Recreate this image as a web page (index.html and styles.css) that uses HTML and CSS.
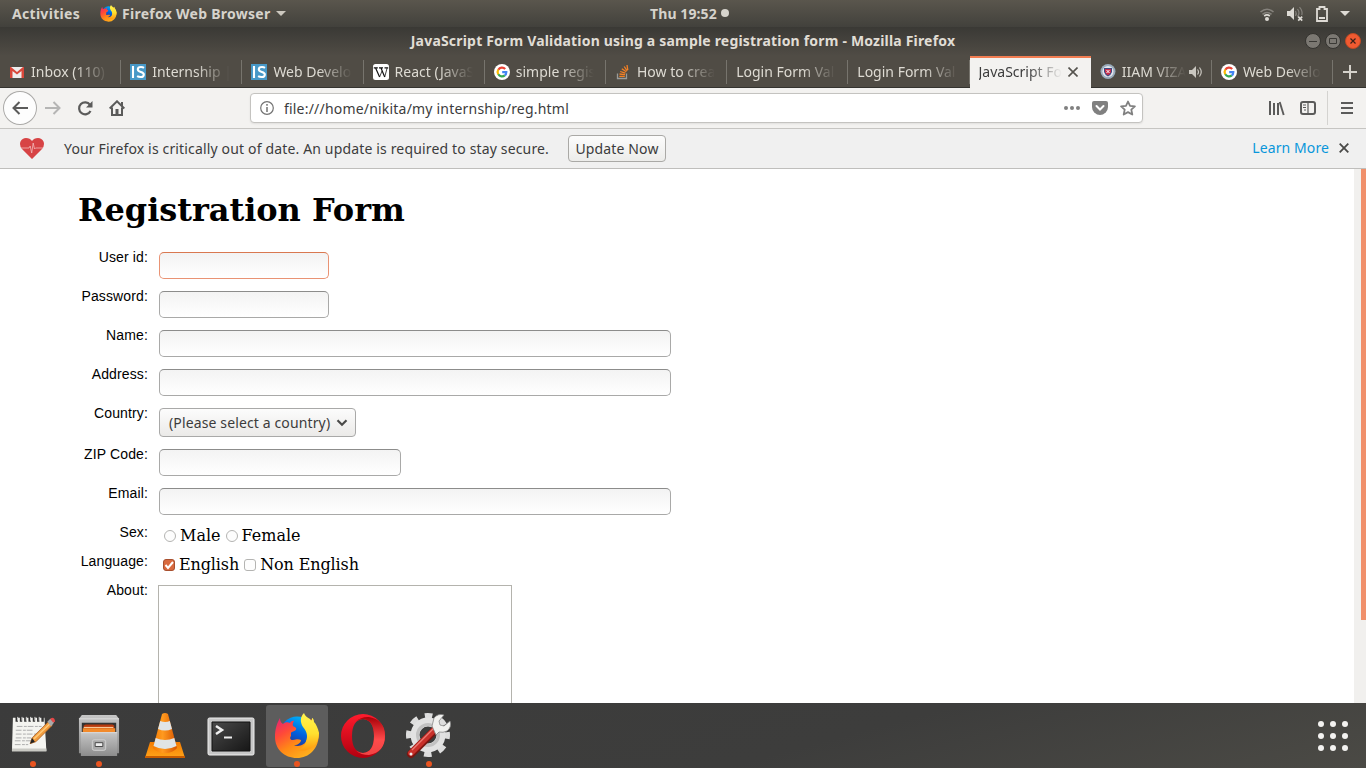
FILE: index.html
```html
<!DOCTYPE html>
<html lang="en">
<head>
<meta charset="utf-8">
<title>JavaScript Form Validation using a sample registration form</title>
<link rel="stylesheet" href="styles.css">
</head>
<body>
<svg class="defs" width="0" height="0">
  <defs>
    <linearGradient id="fxBody" x1="0.1" y1="0" x2="0.8" y2="1"><stop offset="0" stop-color="#e8266f"/><stop offset=".3" stop-color="#ff4a38"/><stop offset=".6" stop-color="#ff8a16"/><stop offset="1" stop-color="#ffb81f"/></linearGradient>
    <linearGradient id="fxTail" x1="0" y1="0" x2="0" y2="1"><stop offset="0" stop-color="#fff44f"/><stop offset=".55" stop-color="#ffe02f"/><stop offset="1" stop-color="#ff980e"/></linearGradient>
    <linearGradient id="fxGlobe" x1=".7" y1="0" x2=".3" y2="1"><stop offset="0" stop-color="#00b5f9"/><stop offset=".5" stop-color="#0060df"/><stop offset="1" stop-color="#312a78"/></linearGradient>
    <linearGradient id="metal" x1="0" y1="0" x2="0" y2="1"><stop offset="0" stop-color="#c6c6c6"/><stop offset="1" stop-color="#8c8c8c"/></linearGradient>
    <linearGradient id="cone" x1="0" x2="1" y1="0" y2="0"><stop offset="0" stop-color="#f57900"/><stop offset=".4" stop-color="#ff9a1f"/><stop offset="1" stop-color="#d95500"/></linearGradient>
    <linearGradient id="base" x1="0" x2="0" y1="0" y2="1"><stop offset="0" stop-color="#f47b00"/><stop offset="1" stop-color="#ffa51a"/></linearGradient>
    <linearGradient id="screen" x1="0" x2="1" y1="0" y2="1"><stop offset="0" stop-color="#4a4a4a"/><stop offset="1" stop-color="#161616"/></linearGradient>
    <linearGradient id="opera" x1="0" x2="0" y1="0" y2="1"><stop offset="0" stop-color="#ff1b2d"/><stop offset="1" stop-color="#b1000f"/></linearGradient>
    <linearGradient id="opera2" x1="0" x2="0" y1="0" y2="1"><stop offset="0" stop-color="#a80008"/><stop offset=".6" stop-color="#ff4b4b"/><stop offset="1" stop-color="#f04444"/></linearGradient>
    <symbol id="firefox" viewBox="0 0 44 46">
      <circle cx="22" cy="20" r="16.500" fill="url(#fxGlobe)"/>
      <path d="M5 5C5 8 6 10 8 11C10 9 13 9 15 10C16 8 18 7.500 19 8C17.500 10 17.500 12 18 13C20 14 22 15 21 16.500C20 18.500 16.500 18.500 16 20L16 23C14 25 16 27.500 18 27C21 26.500 23 25.500 26 27C26 30 22 32.500 19 32C23 34.500 30 32 32 27C34 22 33 17 30 12L36 6L44 20C44 36 34 45 22 45C9 45 0 36 0 24C0 16 2 10 5 5z" fill="url(#fxBody)"/>
      <path d="M29 0C25 4 25 9 28 14C32 19 33 23 31 28C30 33 26 36 22 37C32 40 44 34 44 20C43 15 41 11 39 9C39 7 38 5 37 5C37 8 36 8 35 6C32 4 30 3 29 0z" fill="url(#fxTail)"/>
    </symbol>
    <symbol id="google" viewBox="0 0 16 16"><circle cx="8" cy="8" r="8" fill="#fff"/><g fill="none" stroke-width="2.200"><path d="M4.300 5.700A4.300 4.300 0 0 1 11.200 5" stroke="#ea4335"/><path d="M4.300 10.300a4.300 4.300 0 0 1 0-4.600" stroke="#fbbc05"/><path d="M4.300 10.300A4.300 4.300 0 0 0 10.800 11.300" stroke="#34a853"/><path d="M8.200 8.200h4.100q0 2-1.500 3.100" stroke="#4285f4"/></g></symbol>
    <symbol id="is" viewBox="0 0 16 16"><path fill="#4798c7" d="M0 0h16v16H0z"/><path d="M3 2v12M14 3.800Q12.800 3 11 3q-3.200 0-3.200 2.300 0 1.800 3 2.600t3 2.500Q13.800 13 10.700 13q-2.100 0-3.600-.9" fill="none" stroke="#fff" stroke-width="2.100"/></symbol>
  </defs>
</svg>
<div class="desktop">
  <header class="panel">
    <span class="activities">Activities</span>
    <svg class="panel-fox" width="17" height="17"><use href="#firefox"/></svg>
    <span class="appname">Firefox Web Browser</span>
    <svg class="caret" width="10" height="5"><path d="M0 0h10L5 5z" fill="#ccc8bf"/></svg>
    <div class="clock"><span>Thu 19:52</span><i></i></div>
    <div class="tray">
      <svg width="16" height="16" viewBox="0 0 16 16" fill="none" stroke-width="1.600"><path d="M1.500 6Q8 .5 14.500 6M3.500 8.300q4.500-3.600 9 0" stroke="#85827c"/><path d="M5.200 10q2.800-2.200 5.600 0" stroke="#dedbd5"/><circle cx="8" cy="13" r="2" fill="#dedbd5"/></svg>
      <svg width="18" height="16" viewBox="0 0 18 16"><path d="M1 5h3l4-4v13l-4-4H1z" fill="#dedbd5"/><path d="M9.500 5q1.500 2.500 0 5M11.500 3q3 4 0 7.500M13.500 1.200q3.500 4 2.300 8" fill="none" stroke="#85827c" stroke-width="1.200"/><path d="m12.200 10.700 4 4m0-4-4 4" stroke="#dedbd5" stroke-width="1.700"/></svg>
      <svg width="14" height="16" viewBox="0 0 14 16"><path d="M2 3h2.500V1h5v2H12v12H2z" fill="none" stroke="#dedbd5" stroke-width="1.800"/><path d="M4 12h6" stroke="#dedbd5" stroke-width="2"/></svg>
      <svg width="10" height="5"><path d="M0 0h10L5 5z" fill="#dedbd5"/></svg>
    </div>
  </header>
  <div class="titlebar">
    <span class="title">JavaScript Form Validation using a sample registration form - Mozilla Firefox</span>
    <div class="winbtns">
      <svg width="16" height="16"><circle cx="8" cy="8" r="7.500" fill="#7b7872" stroke="#34332f"/><path d="M4 8.500h8" stroke="#3a3935"/></svg>
      <svg width="16" height="16"><circle cx="8" cy="8" r="7.500" fill="#7b7872" stroke="#34332f"/><path d="M4.500 5.500h7v5h-7z" fill="none" stroke="#3a3935"/></svg>
      <svg width="16" height="16"><circle cx="8" cy="8" r="7.500" fill="#f05a31" stroke="#c04a24"/><path d="m5.500 5.500 5 5m0-5-5 5" stroke="#3a2018" stroke-width="1.200"/></svg>
    </div>
  </div>
  <nav class="tabs">
    <div class="tab"><svg width="16" height="16"><path d="M1 3h14v11H1z" fill="#eee"/><path d="M1 14V3h1l6 5 6-5h1v11h-2.500V7L8 10.500 3.500 7v7z" fill="#d9483b"/></svg><span>Inbox (110) - </span></div>
    <div class="tab"><svg width="16" height="16"><use href="#is"/></svg><span>Internship | S</span></div>
    <div class="tab"><svg width="16" height="16"><use href="#is"/></svg><span>Web Develo</span></div>
    <div class="tab"><svg width="16" height="16"><rect width="16" height="16" rx="2.500" fill="#fff"/><path d="M.8 3.800h4M6 3.800h4M11.500 3.800h3.700M2.600 4l4 9M8 4l3.700 9" stroke="#111" stroke-width="1.200"/><path d="M6.600 13 9 7M11.700 13l2.400-9" fill="none" stroke="#111" stroke-width=".8"/></svg><span>React (JavaS</span></div>
    <div class="tab"><svg width="16" height="16"><use href="#google"/></svg><span>simple regis</span></div>
    <div class="tab"><svg width="16" height="16" fill="none"><path d="M2.500 9.500v5h9v-5" stroke="#9b9b98" stroke-width="1.300"/><path d="M4.300 12.300h5.500M4.500 10l5.500.7M5.200 7.500l5.200 1.700M6.800 4.800l4.500 3M9.200 2.500l3 4.300M12 1l.8 5" stroke="#f48024" stroke-width="1.300"/></svg><span>How to crea</span></div>
    <div class="tab"><span>Login Form Val</span></div>
    <div class="tab"><span>Login Form Val</span></div>
    <div class="tab active"><span>JavaScript Fo</span><svg width="10" height="10"><path d="m.5.500 9 9m0-9-9 9" stroke="#55534e" stroke-width="1.600"/></svg></div>
    <div class="tab audio"><svg width="16" height="16"><circle cx="8" cy="7.500" r="7.500" fill="#9aacbc"/><circle cx="8" cy="7.500" r="5.500" fill="#e4e6ed"/><path d="M4 4h8v4q-1 3-4 4.500Q5 11 4 8z" fill="#3e4a82"/><path d="M5 5h6v3q-1 2.500-3 3.300Q6 10.500 5 8z" fill="#c92d48"/><path d="m6.500 6 3 3m0-3-3 3" stroke="#fff"/></svg><span>IIAM VIZAG</span><svg class="speaker" width="14" height="12" viewBox="0 0 14 12"><path d="M0 4h3l4-4v12L3 8H0z" fill="#c9c6bf"/><path d="M8.500 3.500q2 2.500 0 5M10.500 1.500q3.500 4.500 0 9" fill="none" stroke="#c9c6bf" stroke-width="1.200"/></svg></div>
    <div class="tab"><svg width="16" height="16"><use href="#google"/></svg><span>Web Develo</span></div>
    <div class="newtab"><svg width="14" height="14"><path d="M7 0v14M0 7h14" stroke="#d5d2cb" stroke-width="2"/></svg></div>
  </nav>
  <div class="toolbar">
    <div class="back"><svg width="16" height="14"><path d="M7.500 1 1.500 7l6 6M1.500 7H16" fill="none" stroke="#5b5b5a" stroke-width="2"/></svg></div>
    <svg class="fwd" width="16" height="14"><path d="m8.500 1 6 6-6 6M14.500 7H0" fill="none" stroke="#b5b5b4" stroke-width="2"/></svg>
    <svg class="reload" width="16" height="16"><path d="M13.500 11A6 6 0 1 1 13 4.800" fill="none" stroke="#5b5b5a" stroke-width="2.200"/><path d="M15.500 1v6.500H9z" fill="#5b5b5a"/></svg>
    <svg class="home" width="16" height="16"><path d="M.7 8.500 8 1.300l7.300 7.200M3 7.500V15h10V7.500" fill="none" stroke="#5b5b5a" stroke-width="2"/><path d="M6.500 9h3v6h-3z" fill="#5b5b5a"/><path d="M12 2h2v4h-2z" fill="#5b5b5a"/></svg>
    <div class="urlbar">
      <svg width="14" height="14"><circle cx="7" cy="7" r="6.300" fill="none" stroke="#737373" stroke-width="1.200"/><path d="M7 6v5M7 3v1.700" stroke="#737373" stroke-width="1.500"/></svg>
      <span class="url">file:///home/nikita/my internship/reg.html</span>
      <svg class="dots" width="16" height="4" fill="#808080"><circle cx="2" cy="2" r="2"/><circle cx="8" cy="2" r="2"/><circle cx="14" cy="2" r="2"/></svg>
      <svg class="pocket" width="16" height="14"><path d="M2 0h12q2 0 2 2v4q0 3-2.300 5.500Q11 14 8 14t-5.700-2.500Q0 9 0 6V2q0-2 2-2z" fill="#808080"/><path d="m4.500 5 3.500 3.500L11.500 5" fill="none" stroke="#fff" stroke-width="2" stroke-linecap="round"/></svg>
      <svg width="16" height="16"><path d="m8 1.500 2 4.400 4.900.5-3.600 3.200 1 4.900L8 12.100l-4.300 2.400 1-4.900L1.100 6.400 6 5.900z" fill="none" stroke="#808080" stroke-width="1.800" stroke-linejoin="round"/></svg>
    </div>
    <svg class="library" width="16" height="15"><path d="M1 0v14M5 2v12M9 2v12" stroke="#5b5b5a" stroke-width="2"/><path d="m10.700 1 4 13" stroke="#5b5b5a" stroke-width="1.900"/></svg>
    <svg class="sidebar" width="16" height="14"><rect x="1" y="1" width="14" height="12" rx="2" fill="none" stroke="#5b5b5a" stroke-width="2"/><path d="M8 1v12M3 4h3M3 6.500h3M4 9h2" stroke="#5b5b5a" stroke-width="1.200"/></svg>
    <div class="menu"><svg width="12" height="12"><path d="M0 1h12M0 6h12M0 11h12" stroke="#5b5b5a" stroke-width="2"/></svg></div>
  </div>
  <div class="notice">
    <svg width="24" height="21" viewBox="0 0 24 21"><path d="M12 21 2 11Q-1 7.500.5 3.500 2.200 0 6 0q4 0 6 3 2-3 6-3 3.800 0 5.500 3.500Q25 7.500 22 11z" fill="#d74345"/><path d="M1 10h8l1.200-2 1.500 7L13.200 5l1.300 6 1-1H23" fill="none" stroke="#f3b9b9" stroke-width=".8"/></svg>
    <span class="msg">Your Firefox is critically out of date. An update is required to stay secure.</span>
    <button class="update">Update Now</button>
    <a class="learn">Learn More</a>
    <svg class="dismiss" width="10" height="10"><path d="m.7.700 8.600 8.600m0-8.600L.7 9.300" stroke="#494947" stroke-width="1.800"/></svg>
  </div>
  <main class="page">
    <form class="form">
      <h1>Registration Form</h1>
      <div class="row"><label>User id:</label><input class="short focus" type="text"></div>
      <div class="row"><label>Password:</label><input class="short" type="password"></div>
      <div class="row"><label>Name:</label><input class="long" type="text"></div>
      <div class="row"><label>Address:</label><input class="long" type="text"></div>
      <div class="row"><label>Country:</label><div class="select"><span>(Please select a country)</span><svg width="12" height="8"><path d="m1.500 1.200 4.500 4.500 4.500-4.500" fill="none" stroke="#4a4a49" stroke-width="2.200"/></svg></div></div>
      <div class="row"><label>ZIP Code:</label><input class="mid" type="text"></div>
      <div class="row"><label>Email:</label><input class="long" type="text"></div>
      <div class="row choices"><label>Sex:</label><div class="opts"><i class="radio"></i><span>Male</span><i class="radio"></i><span>Female</span></div></div>
      <div class="row choices"><label>Language:</label><div class="opts lang"><i class="check on"><svg width="12" height="12"><path d="m2.500 6 2.500 3 5-6" fill="none" stroke="#fff" stroke-width="2"/></svg></i><span>English</span><i class="check"></i><span>Non English</span></div></div>
      <div class="row about"><label>About:</label><div class="textarea"></div></div>
    </form>
    <div class="scroll"><div class="thumb"></div></div>
  </main>
  <footer class="dock">
    <div class="app running">
      <svg width="46" height="44" viewBox="0 1 48 46"><path d="M3 5h33l2 35H2z" fill="#f4f4f0"/><path d="M2 37h36v3H2z" fill="#c9c9c3"/><path d="M7 14h26M6 18h18M6 22h24M6 26h16M5 29h20M5 33h14" stroke="#aaa" stroke-dasharray="6 1.500 3 1"/><path d="M7 4v5M11.500 4v5M16 4v5M20.500 4v5M25 4v5M29.500 4v5M34 4v5" stroke="#333" stroke-width="2.500"/><path d="M8 4v4M12.500 4v4M17 4v4M21.500 4v4M26 4v4M30.500 4v4" stroke="#ddd"/><path d="m21 32 2-6L40 9l4 4-17 17z" fill="#f19b3d" stroke="#a35b1d" stroke-width=".8"/><path d="m25 27 17-16" stroke="#ffca78" stroke-width="1.500"/><path d="m21 32 2-6 3 4z" fill="#222"/><path d="m39 9 3-3 4 4-3 4z" fill="#aaa"/><path d="m42 6 2-1q3 0 3 4l-2 1z" fill="#e64747"/></svg>
    </div>
    <div class="app running">
      <svg width="42" height="44" viewBox="0 0 44 46"><path d="M4 1h36l3 4v36H1V5z" fill="url(#metal)"/><path d="M1 5h42" stroke="#ddd"/><path d="M4 9h36v10H4z" fill="#333"/><path d="M6 12l2-1h28l2 1v7H6z" fill="#b93a0d"/><path d="M5 15h34v4H5z" fill="#f28a2b"/><path d="M6 14h31" stroke="#ffe0b0"/><path d="M3 19h38v25H3z" fill="url(#metal)"/><path d="M3 19.500h38" stroke="#ddd"/><rect x="15" y="27" width="14" height="11" rx="2" fill="#aaa" stroke="#d2d2d2"/><path d="M18 30h8v4h-8z" fill="#eee" stroke="#444"/></svg>
    </div>
    <div class="app">
      <svg width="42" height="46" viewBox="0 0 42 46"><path d="M6 29h30l5 16H1z" fill="url(#base)"/><path d="M1 44h40" stroke="#c85c00" stroke-width="2"/><path d="m18 1q3-2 6 0l9 34q-4 5-12 5T9 35z" fill="url(#cone)"/><path d="m16.200 8q5 2 9.600 0l2.200 8q-7 3-14 0zM11.700 25q9.300 4 18.600 0l2.200 8q-11.500 6-23 0z" fill="#e0e4e6"/></svg>
    </div>
    <div class="app">
      <svg width="48" height="40" viewBox="0 -1 48 40"><rect x="1" y="1" width="46" height="37" rx="1.500" fill="#c7c7c7" stroke="#eee"/><path d="M5 5h38v29H5z" fill="url(#screen)" stroke="#111"/><path d="m9 9 6 4-6 4" fill="none" stroke="#eee" stroke-width="2.500"/><path d="M17 20.500h8" stroke="#eee" stroke-width="2"/></svg>
    </div>
    <div class="app running current"><svg width="44" height="46" viewBox="0 0 44 46"><use href="#firefox"/></svg></div>
    <div class="app">
      <svg width="44" height="44"><path d="M22 0a22 22 0 1 0 0 44a22 22 0 0 0 0-44zM22 5Q33 6 33 22T22 39Q11 38 11 22T22 5z" fill="url(#opera)" fill-rule="evenodd"/><path d="M15 7.500Q20 2.500 28 3Q44 6 44 22T28 41Q20 41 15 36.500Q19 39 22 39Q33 38 33 22T22 5Q18 5 15 7.500z" fill="url(#opera2)"/></svg>
    </div>
    <div class="app running">
      <svg width="46" height="46" viewBox="0 0 46 46"><circle cx="22" cy="22" r="18.500" fill="none" stroke="#ddd" stroke-width="7" stroke-dasharray="7.300 7.230" stroke-dashoffset="3.650"/><circle cx="22" cy="22" r="13" fill="none" stroke="#e2e2e2" stroke-width="9"/><circle cx="22" cy="22" r="10.500" fill="none" stroke="#c2c2c2" stroke-width="3"/><path d="m5 41 25-25" stroke="#7b1510" stroke-width="8" stroke-linecap="round"/><path d="m5 40 25-25" stroke="#c9302a" stroke-width="6" stroke-linecap="round"/><path d="m6 37 22-22" stroke="#ec7a72" stroke-width="1.300"/><circle cx="5" cy="41" r="1.500" fill="#eee"/><path d="m26 13 2-8q4-5 10-3l-5 6 1 4 4 1 6-5q2 6-3 10-4 2-8 1l-3 3z" fill="#f1f1ef" stroke="#888" stroke-width=".8"/></svg>
    </div>
    <svg class="grid" width="30" height="30" fill="#f3f2f0"><circle cx="3" cy="3" r="3"/><circle cx="15" cy="3" r="3"/><circle cx="27" cy="3" r="3"/><circle cx="3" cy="15" r="3"/><circle cx="15" cy="15" r="3"/><circle cx="27" cy="15" r="3"/><circle cx="3" cy="27" r="3"/><circle cx="15" cy="27" r="3"/><circle cx="27" cy="27" r="3"/></svg>
  </footer>
</div>
</body>
</html>
```
FILE: styles.css
```css
* { box-sizing: border-box; }
body { margin: 0; overflow: hidden; font-family: "Noto Sans", sans-serif; font-size: 14px; color: #3c3c3c; }
svg { display: block; flex: none; }
.defs { position: absolute; }
.desktop { width: 1366px; height: 768px; display: flex; flex-direction: column; background: #fff; white-space: nowrap; }

.panel { height: 27px; flex: none; display: flex; align-items: center; padding: 0 15px 0 12px; background: linear-gradient(#5a564d, #42413c); color: #d6d3cc; font-weight: bold; position: relative; }
.activities { letter-spacing: .3px; width: 88px; }
.appname { margin-left: 5px; width: 150px; letter-spacing: .27px; }
.caret { margin-left: 4px; }
.clock { position: absolute; left: 650px; top: 0; height: 26px; display: flex; align-items: center; gap: 4px; }
.clock span { width: 67px; letter-spacing: .1px; }
.clock i { width: 8px; height: 8px; border-radius: 50%; background: #d6d3cc; }
.tray { margin-left: auto; margin-right: 1px; display: flex; align-items: center; gap: 11px; }

.titlebar { height: 29px; flex: none; position: relative; display: flex; align-items: center; justify-content: center; padding-bottom: 2px; background: linear-gradient(#3a3935, #504c45); color: #e0ddd5; font-weight: bold; }
.title { letter-spacing: .19px; }
.winbtns { position: absolute; right: 5px; top: 6px; display: flex; gap: 4px; }

.tabs { height: 32px; flex: none; display: flex; background: #504c45; box-shadow: inset 0 -1px #34332f; color: #dedbd3; }
.tab { width: 121.200px; flex: none; display: flex; align-items: center; padding: 0 12px 0 9px; gap: 6px; position: relative; }
.tab::after { content: ""; position: absolute; right: 0; top: 4px; height: 24px; width: 1px; background: #77746d; }
.tab span { flex: 1; min-width: 0; overflow: hidden; margin-top: -2px; -webkit-mask-image: linear-gradient(to left, transparent, #000 34px); mask-image: linear-gradient(to left, transparent, #000 34px); }
.tab.active { background: #f3f2f0; color: #3c3c3c; border-top: 2px solid #f27d52; padding-right: 13px; }
.tab.active span { margin-top: -4px; }
.tab.active svg { margin-top: -2px; }
.tab.active::after { display: none; }
.tab.audio { padding-right: 9px; }
.tab.audio span { margin-right: -3px; }
.newtab { flex: 1; display: flex; align-items: center; justify-content: center; }

.toolbar { height: 41px; flex: none; display: flex; align-items: center; background: #f3f2f0; border-bottom: 1px solid #c6c5c2; padding-left: 3px; }
.back { width: 34px; height: 34px; border: 1px solid #aaa9a7; border-radius: 50%; background: #fdfdfd; display: flex; align-items: center; justify-content: center; }
.fwd { margin-left: 8px; }
.reload { margin-left: 16px; }
.home { margin-left: 16px; }
.urlbar { margin-left: 125px; width: 894px; height: 30px; background: #fff; border: 1px solid #c4c3c0; border-radius: 4px; display: flex; align-items: center; padding: 0 6px 0 9px; box-shadow: 0 1px 2px #00000014; }
.url { margin-left: 10px; flex: 1; letter-spacing: .2px; }
.pocket { margin: 0 12px; }
.library { margin-left: 126px; }
.sidebar { margin-left: 15px; }
.menu { margin-left: 11px; width: 39px; height: 34px; border-left: 1px solid #d4d3d0; display: flex; align-items: center; justify-content: center; }

.notice { height: 40px; flex: none; display: flex; align-items: center; background: #f0f0f0; border-bottom: 1px solid #bfbebc; padding: 0 17px 0 20px; }
.msg { margin-left: 20px; width: 504px; letter-spacing: .155px; }
.update { width: 98px; height: 27px; padding: 0; font: inherit; letter-spacing: .15px; color: #3c3c3c; border: 1px solid #aaa9a6; border-radius: 4px; background: linear-gradient(#fcfcfc, #ececea); }
.learn { margin-left: auto; margin-top: -2px; letter-spacing: .1px; color: #0996db; }
.dismiss { margin-left: 10px; margin-top: -1px; }

.page { flex: 1; min-height: 0; display: flex; overflow: hidden; background: #fff; color: #000; }
.form { flex: 1; padding-left: 78px; }
h1 { margin: 22px 0 20px; font: bold 32px/38px "DejaVu Serif", serif; letter-spacing: -.05px; }
.row { display: flex; align-items: flex-start; margin-bottom: 9px; }
.row > label { width: 70px; margin-right: 11px; text-align: right; font: 14px/16px "Liberation Sans", sans-serif; letter-spacing: .13px; }
input { margin: 3px 0 0; height: 27px; border: 1px solid #a9a9a8; border-top-color: #8c8c8b; border-radius: 5px; background: linear-gradient(#f3f3f3, #fff); outline: none; }
.short { width: 170px; }
.mid { width: 242px; }
.long { width: 512px; }
.focus { border-color: #e99374; border-top-color: #d97850; }
.select { margin-top: 3px; width: 197px; height: 29px; border: 1px solid #a9a9a8; border-radius: 4px; background: linear-gradient(#fcfcfc, #ebeae8); color: #3c3c3c; letter-spacing: .13px; display: flex; align-items: center; padding: 0 7px 0 9px; justify-content: space-between; }
.choices { height: 29px; margin: 0; }
.opts { display: flex; align-items: center; margin-top: 2px; height: 19px; padding-left: 5px; font: 16px/19px "DejaVu Serif", serif; }
.opts span { margin: 0 5px 0 4px; }
.lang { padding-left: 4px; letter-spacing: -.12px; }
.radio, .check { width: 12px; height: 12px; margin-top: 1px; border: 1px solid #b4b4b2; border-radius: 50%; background: #fdfdfd; }
.check { border-radius: 3px; }
.check.on { background: #d96a3f; border-color: #a8502f; }
.check.on svg { margin: -1px; }
.about { margin: 0; }
.textarea { width: 354px; height: 150px; margin: 3px 0 0 -1px; border: 1px solid #b4b3ad; }
.scroll { width: 12px; background: #f1f0ee; }
.thumb { width: 5px; height: 451px; margin-left: 7px; background: #f0906b; }

.dock { height: 65px; flex: none; position: relative; z-index: 1; display: flex; align-items: center; gap: 4px; padding: 0 18px 0 2px; background: linear-gradient(165deg, #3b3b3b 0%, #3d3d3c 60%, #4b4a45 100%); }
.app { width: 62px; height: 62px; border-radius: 3px; display: flex; align-items: center; justify-content: center; position: relative; }
.running::after { content: ""; position: absolute; bottom: 0; left: 28px; width: 6px; height: 6px; border-radius: 50%; background: #e95420; }
.current { background: #5d5d5d; }
.grid { margin-left: auto; }
```
